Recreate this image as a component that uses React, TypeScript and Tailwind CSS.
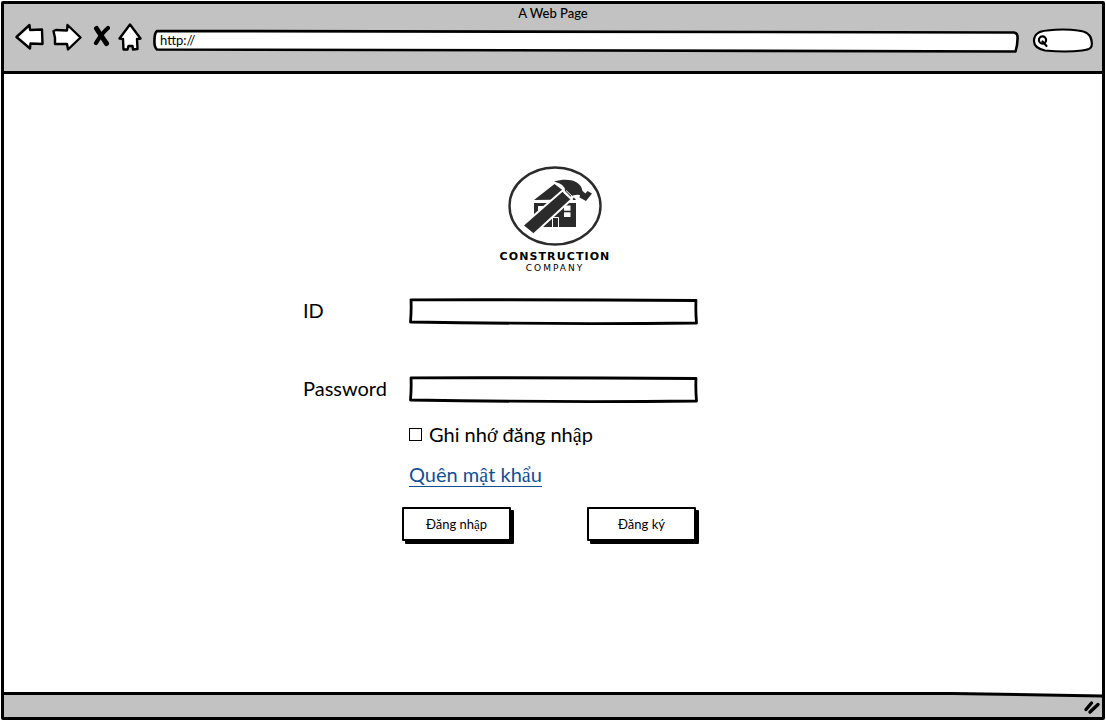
import type { ReactNode } from "react";

function Serif({ children }: { children: ReactNode }) {
  return <span className="font-['Liberation_Serif',serif]">{children}</span>;
}

function BackIcon() {
  return (
    <svg width="30" height="30" viewBox="0 0 30 30" fill="white" stroke="black" strokeWidth="2.4" strokeLinejoin="round" aria-hidden="true">
      <path d="M1.500 15 L14.500 3 L15 8 L27 7.500 L27.500 22 L15.500 21.500 L15 26.500 Z" />
    </svg>
  );
}

function ForwardIcon() {
  return (
    <svg width="30" height="30" viewBox="0 0 30 30" fill="white" stroke="black" strokeWidth="2.4" strokeLinejoin="round" aria-hidden="true">
      <path d="M1.500 9 L4 8 L15 8.500 L15.500 3 L28.500 15.500 L16 27.500 L15 22 L3 22 L3 16 Z" />
    </svg>
  );
}

function StopIcon() {
  return (
    <svg width="18" height="30" viewBox="0 0 18 30" fill="none" stroke="black" strokeLinecap="round" aria-hidden="true">
      <path d="M4.500 6.500 Q8 12 14.500 21.500" strokeWidth="5" />
      <path d="M16 6 Q10 11 4 21" strokeWidth="4.200" />
    </svg>
  );
}

function HomeIcon() {
  return (
    <svg width="24" height="30" viewBox="0 0 24 30" fill="white" stroke="black" strokeWidth="2.4" strokeLinejoin="round" aria-hidden="true">
      <path d="M12 2.500 L22.500 16.500 L19 17 L19.500 27 L15 27.500 L14.500 24 L10.500 24 L9.500 27.500 L5.500 27.500 L5 17 L1.500 16.500 Z" />
    </svg>
  );
}

function Logo() {
  return (
    <div className="flex flex-col items-center font-['DejaVu_Sans',sans-serif]">
      <svg width="94" height="80" viewBox="0 0 94 80" role="img" aria-label="Construction Company logo">
        <ellipse cx="47" cy="40" rx="45.5" ry="38.5" fill="white" stroke="#2b2b2b" strokeWidth="2.4" />
        <g fill="#2b2b2b">
          <path d="M46.500 18 L57 26 L60 33.500 L26 34 Z" />
          <path d="M62 34 L66 31.500 L68 34 Z" />
          <path fillRule="evenodd" d="M26 37 H68 V61 H26 Z M30 40 V49 H38 V40 Z M56 39.500 V51 H62.500 V39.500 Z" />
        </g>
        <path d="M56 45.500 H63" stroke="#2b2b2b" strokeWidth="1.6" />
        <path d="M44.500 61 V51.500 H50.500 V61" fill="none" stroke="white" strokeWidth="1" />
        <path d="M54.500 24.500 L64 33 L25.500 68.500 L14.500 59.500 Z" fill="#2b2b2b" stroke="white" strokeWidth="2" />
        <path d="M46 15.500 C55 13 63 13.500 68 16 Q73.500 19 74.500 25 L77.500 27.500 L79.500 25 L84 27.500 L78 35 L71.500 31.500 L72 29 Q67 28 62.500 30.500 L57 25 Q58 18.500 46 15.500 Z" fill="#2b2b2b" />
        <path d="M55.500 26.500 L62.500 33 M58 24.500 L64.500 30.500" stroke="white" strokeWidth="1" />
      </svg>
      <p className="mt-1 text-[11px] leading-[14px] font-bold tracking-widest text-black">CONSTRUCTION</p>
      <p className="text-[9px] leading-[8px] tracking-[2px] text-black">COMPANY</p>
    </div>
  );
}

function SketchField({ id, type }: { id: string; type: string }) {
  return (
    <div className="relative h-[27px] flex-1">
      <svg className="absolute inset-0 size-full" viewBox="0 0 289 27" preserveAspectRatio="none" aria-hidden="true">
        <path
          d="M2 1.800 Q150 1.500 287 2.500 Q286.500 14 287.500 25 Q150 26.500 1.500 24 Q2.500 12 2 1.800 Z"
          fill="white"
          stroke="black"
          strokeWidth="2.800"
          strokeLinejoin="round"
        />
      </svg>
      <input id={id} type={type} className="relative size-full bg-transparent px-2 text-base outline-none" />
    </div>
  );
}

const button =
  "flex h-[34px] w-[109px] items-center justify-center rounded-[1px] border-2 border-black bg-white text-[13px] leading-4 shadow-[3px_3px_0_0_#000]";

export default function App() {
  return (
    <div className="flex min-h-screen bg-white p-px font-[Lato,sans-serif] text-black">
      <div className="flex flex-1 flex-col rounded-[2px] border-[3px] border-black">
        <header className="h-[70px] border-b-[3px] border-black bg-[#c2c2c2]">
          <h1 className="text-center text-[13px] leading-[18px] font-medium">A Web Page</h1>
          <nav className="flex items-start pr-2 pl-[11px]">
            <button type="button" aria-label="Back"><BackIcon /></button>
            <button type="button" aria-label="Forward" className="ml-[7px]"><ForwardIcon /></button>
            <button type="button" aria-label="Stop" className="ml-[10px]"><StopIcon /></button>
            <button type="button" aria-label="Home" className="ml-[8px]"><HomeIcon /></button>
            <div className="relative mt-[7px] ml-[11px] h-[24px] min-w-0 flex-1">
              <svg className="absolute inset-0 size-full" viewBox="0 0 866 24" preserveAspectRatio="none" aria-hidden="true">
                <path
                  d="M4 2 Q430 2 861 3.500 Q864 4 864.500 7 Q865 14 862.500 22.500 Q430 22 4 20.500 Q1 18 1.500 11 Q1.500 4 4 2 Z"
                  fill="white"
                  stroke="black"
                  strokeWidth="2.600"
                  strokeLinejoin="round"
                />
              </svg>
              <input
                aria-label="Address"
                defaultValue="http://"
                className="relative block h-[22px] w-full bg-transparent px-[7px] text-[13px] leading-4 outline-none"
              />
            </div>
            <label className="relative mt-[6px] ml-[13px] flex h-[25px] w-[62px] items-center pl-[5px]">
              <svg className="absolute inset-0 size-full" viewBox="0 0 62 25" fill="white" stroke="black" strokeWidth="2.200" aria-hidden="true">
                <path d="M2 13 C2 6 8 3 15 2.500 Q32 0.500 46 2.500 Q59 4 59.500 13 C61 20 58 21.500 50 22.500 Q34 24.500 13 22.500 Q2 20 2 13 Z" />
              </svg>
              <svg className="relative" width="12" height="14" viewBox="0 0 12 14" fill="none" stroke="black" strokeWidth="2.2" strokeLinecap="round" aria-hidden="true">
                <circle cx="5.500" cy="6" r="3.600" />
                <path d="M5.500 7.500 L9.500 12" />
              </svg>
              <input aria-label="Search" className="relative w-9 bg-transparent text-xs outline-none" />
            </label>
          </nav>
        </header>

        <main className="flex flex-1 flex-col items-center pt-[92px]">
          <div className="ml-1"><Logo /></div>
          <form className="mt-[26px] mr-[105px] w-[395px] text-[20px] leading-6" onSubmit={(e) => e.preventDefault()}>
            <div className="flex items-start">
              <label htmlFor="user" className="w-[106px] shrink-0">ID</label>
              <SketchField id="user" type="text" />
            </div>
            <div className="mt-[51px] flex items-start">
              <label htmlFor="password" className="w-[106px] shrink-0">Password</label>
              <SketchField id="password" type="password" />
            </div>
            <div className="mt-[19px] ml-[106px] flex items-center gap-[7px]">
              <input id="remember" type="checkbox" className="size-[13px] appearance-none border border-black bg-white checked:bg-black" />
              <label htmlFor="remember">
                Ghi nh<Serif>ớ</Serif> đăng nh<Serif>ậ</Serif>p
              </label>
            </div>
            <div className="mt-4 ml-[106px] flex">
              <a href="#forgot" className="border-b border-[#134f93] leading-[22px] text-[#134f93]">
                Quên m<Serif>ậ</Serif>t kh<Serif>ẩ</Serif>u
              </a>
            </div>
            <div className="mt-5 -mr-1 ml-[99px] flex items-start gap-[76px]">
              <button type="submit" className={button}>
                <span>Đăng nh<Serif>ậ</Serif>p</span>
              </button>
              <button type="button" className={button}>
                <span>Đăng ký</span>
              </button>
            </div>
          </form>
        </main>

        <footer className="flex h-[25px] flex-col bg-[#c2c2c2]">
          <svg className="h-[6px] w-full" viewBox="0 0 1100 6" preserveAspectRatio="none" aria-hidden="true">
            <path d="M0 0 H1100 V4 L950 1 Z" fill="white" />
            <path d="M0 1.500 H950 L1100 4" fill="none" stroke="black" strokeWidth="3" />
          </svg>
          <svg className="mr-px self-end" width="18" height="18" viewBox="0 0 18 18" stroke="black" strokeWidth="3.400" strokeLinecap="round" aria-hidden="true">
            <path d="M3 11.500 L8.500 5" />
            <path d="M7 14 L15 6.500" />
          </svg>
        </footer>
      </div>
    </div>
  );
}
